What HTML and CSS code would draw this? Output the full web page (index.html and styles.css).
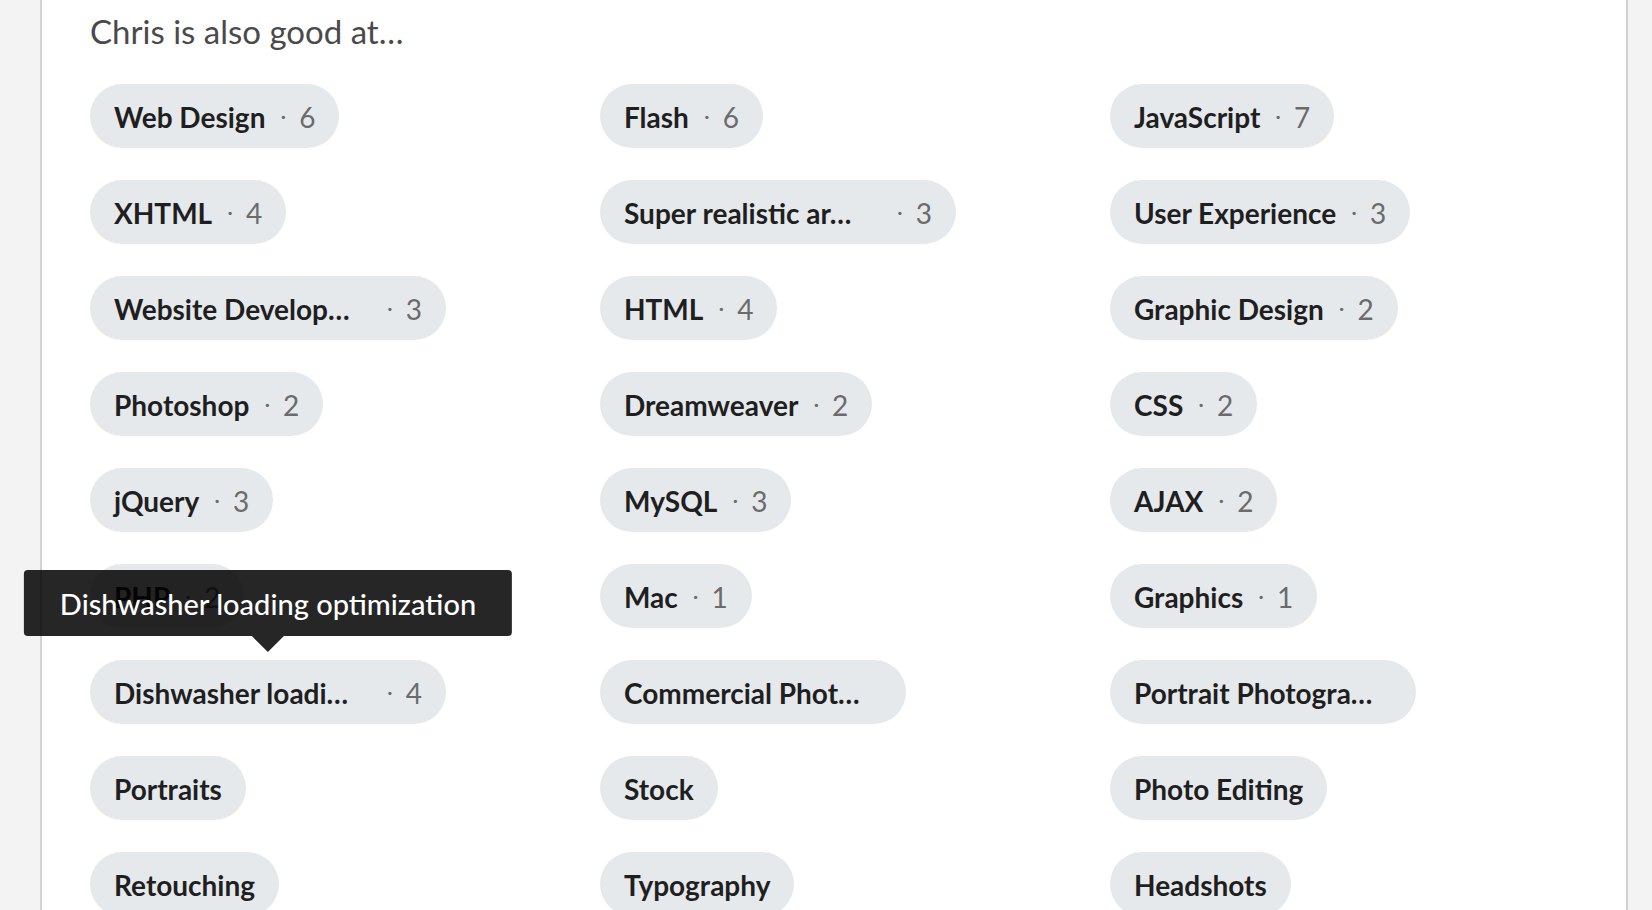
FILE: index.html
```html
<!DOCTYPE html>
<html lang="en">
<head>
<meta charset="utf-8">
<title>Skills</title>
<link rel="stylesheet" href="styles.css">
</head>
<body>
<main class="card">
  <h2 class="heading">Chris is also good at…</h2>
  <ul class="skills">
    <li><span class="pill"><span class="label">Web Design</span><span class="dot">·</span><span class="count">6</span></span></li>
    <li><span class="pill"><span class="label">Flash</span><span class="dot">·</span><span class="count">6</span></span></li>
    <li><span class="pill"><span class="label">JavaScript</span><span class="dot">·</span><span class="count">7</span></span></li>

    <li><span class="pill"><span class="label">XHTML</span><span class="dot">·</span><span class="count">4</span></span></li>
    <li><span class="pill"><span class="label trunc">Super realistic ar…</span><span class="dot">·</span><span class="count">3</span></span></li>
    <li><span class="pill"><span class="label">User Experience</span><span class="dot">·</span><span class="count">3</span></span></li>

    <li><span class="pill"><span class="label trunc">Website Develop…</span><span class="dot">·</span><span class="count">3</span></span></li>
    <li><span class="pill"><span class="label">HTML</span><span class="dot">·</span><span class="count">4</span></span></li>
    <li><span class="pill"><span class="label">Graphic Design</span><span class="dot">·</span><span class="count">2</span></span></li>

    <li><span class="pill"><span class="label">Photoshop</span><span class="dot">·</span><span class="count">2</span></span></li>
    <li><span class="pill"><span class="label">Dreamweaver</span><span class="dot">·</span><span class="count">2</span></span></li>
    <li><span class="pill"><span class="label">CSS</span><span class="dot">·</span><span class="count">2</span></span></li>

    <li><span class="pill"><span class="label">jQuery</span><span class="dot">·</span><span class="count">3</span></span></li>
    <li><span class="pill"><span class="label">MySQL</span><span class="dot">·</span><span class="count">3</span></span></li>
    <li><span class="pill"><span class="label">AJAX</span><span class="dot">·</span><span class="count">2</span></span></li>

    <li><span class="pill"><span class="label">PHP</span><span class="dot">·</span><span class="count">2</span></span></li>
    <li><span class="pill"><span class="label">Mac</span><span class="dot">·</span><span class="count">1</span></span></li>
    <li><span class="pill"><span class="label">Graphics</span><span class="dot">·</span><span class="count">1</span></span></li>

    <li><span class="pill has-tip"><span class="label trunc">Dishwasher loadi…</span><span class="dot">·</span><span class="count">4</span><span class="tooltip">Dishwasher loading optimization</span></span></li>
    <li><span class="pill"><span class="label trunc">Commercial Phot…</span></span></li>
    <li><span class="pill"><span class="label trunc">Portrait Photogra…</span></span></li>

    <li><span class="pill"><span class="label">Portraits</span></span></li>
    <li><span class="pill"><span class="label">Stock</span></span></li>
    <li><span class="pill"><span class="label">Photo Editing</span></span></li>

    <li><span class="pill"><span class="label">Retouching</span></span></li>
    <li><span class="pill"><span class="label">Typography</span></span></li>
    <li><span class="pill"><span class="label">Headshots</span></span></li>
  </ul>
</main>
</body>
</html>
```

FILE: styles.css
```css
html, body {
  margin: 0;
  padding: 0;
  height: 100%;
  overflow: hidden;
  background: #f3f3f3;
}

body {
  font-family: Lato, "Open Sans", "Liberation Sans", sans-serif;
  color: #1f1f1f;
}

.card {
  margin-left: 40px;
  width: 1588px;
  min-height: 100%;
  background: #ffffff;
  border-left: 2px solid #d2d2d2;
  border-right: 2px solid #d2d2d2;
  padding: 11px 0 0 48px;
  box-sizing: border-box;
}

.heading {
  margin: 0 0 33px 0;
  font-size: 33px;
  line-height: 40px;
  font-weight: 400;
  color: #4a4a4a;
}

.skills {
  list-style: none;
  margin: 0;
  padding: 0;
  display: grid;
  grid-template-columns: repeat(3, 510px);
  row-gap: 32px;
}

.skills li {
  display: flex;
}

.pill {
  position: relative;
  display: inline-flex;
  align-items: center;
  height: 64px;
  padding: 2px 24px 0 24px;
  border-radius: 32px;
  background: #e6e9ec;
  box-sizing: border-box;
  white-space: nowrap;
}

.label {
  font-size: 28px;
  font-weight: 700;
  color: #1f1f1f;
}

.label.trunc {
  display: inline-block;
  width: 258px;
  overflow: hidden;
  text-overflow: ellipsis;
}

.dot {
  font-size: 22px;
  color: #6b6b6b;
  margin: 0 13px 4px 15px;
}

.count {
  font-size: 28px;
  font-weight: 400;
  color: #6b6b6b;
}

.tooltip {
  position: absolute;
  left: 50%;
  bottom: calc(100% + 24px);
  transform: translateX(-50%);
  height: 66px;
  padding: 0 36px;
  display: flex;
  align-items: center;
  background: rgba(0, 0, 0, 0.85);
  color: #ffffff;
  border-radius: 4px;
  font-size: 29px;
  font-weight: 500;
  white-space: nowrap;
}

.tooltip::after {
  content: "";
  position: absolute;
  left: 50%;
  top: 100%;
  margin-left: -16px;
  border-left: 16px solid transparent;
  border-right: 16px solid transparent;
  border-top: 16px solid rgba(0, 0, 0, 0.85);
}
```
